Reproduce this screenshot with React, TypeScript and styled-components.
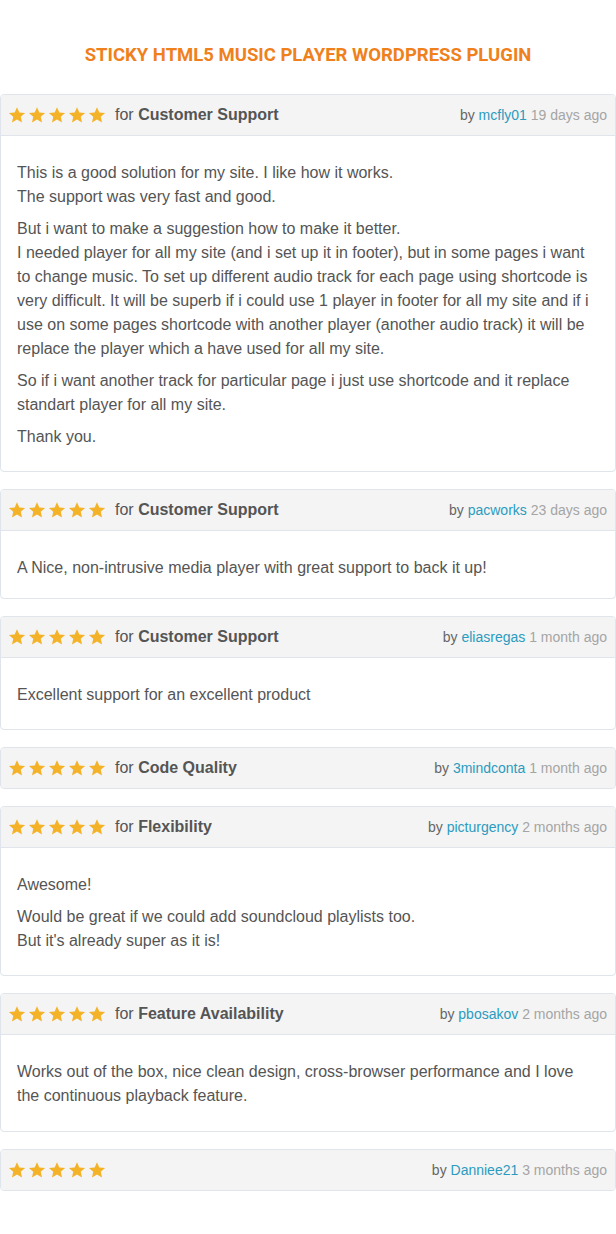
import React from "react";
import styled, { createGlobalStyle } from "styled-components";

const GlobalStyle = createGlobalStyle`
  html, body { margin: 0; padding: 0; background: #fff; }
  body { font-family: "Liberation Sans", Arial, sans-serif; }
`;

const Page = styled.div`
  width: 616px;
  padding: 0 0 40px;
  display: flex;
  flex-direction: column;
  gap: 17px;
`;

const Title = styled.h1`
  margin: 0;
  height: 94px;
  display: flex;
  align-items: center;
  justify-content: center;
  padding-top: 16px;
  box-sizing: border-box;
  margin-bottom: -17px;
  font-family: "Roboto", "Liberation Sans", sans-serif;
  font-weight: 700;
  font-size: 18.5px;
  color: #ef801c;
`;

const Card = styled.section`
  border: 1px solid #dfe5ea;
  border-radius: 4px;
  overflow: hidden;
  background: #fff;
`;

const Header = styled.div`
  height: 40px;
  background: #f4f4f4;
  display: flex;
  align-items: center;
  justify-content: space-between;
  padding: 0 8px 0 7px;
  font-size: 16px;
  color: #555;
`;

const Left = styled.div`
  display: flex;
  align-items: center;
  gap: 9px;
`;

const Stars = styled.div`
  display: flex;
  gap: 2px;
`;

const For = styled.span`
  color: #555;
  b { font-weight: 700; }
`;

const Meta = styled.span`
  font-size: 14px;
  color: #666;
`;

const User = styled.span`
  color: #2b9bbf;
`;

const Ago = styled.span`
  color: #a5a5a5;
`;

const Body = styled.div<{ $bottom?: number }>`
  border-top: 1px solid #dfe5ea;
  padding: 25px 16px ${(p) => p.$bottom ?? 22}px;
  font-size: 16px;
  line-height: 24px;
  color: #555;
  p { margin: 0; }
  p + p { margin-top: 8px; }
`;

const Star = () => (
  <svg width="18" height="18" viewBox="0 0 24 24">
    <path
      fill="#f4b229"
      d="M12 1.5l3.1 7.1 7.7.7-5.8 5.1 1.7 7.6L12 18l-6.7 4 1.7-7.6-5.8-5.1 7.7-.7z"
    />
  </svg>
);

type Review = {
  cat?: string;
  user: string;
  ago: string;
  bottom?: number;
  paras?: React.ReactNode[];
};

const reviews: Review[] = [
  {
    cat: "Customer Support",
    user: "mcfly01",
    ago: "19 days ago",
    paras: [
      <>This is a good solution for my site. I like how it works.<br />The support was very fast and good.</>,
      <>But i want to make a suggestion how to make it better.<br />I needed player for all my site (and i set up it in footer), but in some pages i want to change music. To set up different audio track for each page using shortcode is very difficult. It will be superb if i could use 1 player in footer for all my site and if i use on some pages shortcode with another player (another audio track) it will be replace the player which a have used for all my site.</>,
      <>So if i want another track for particular page i just use shortcode and it replace standart player for all my site.</>,
      <>Thank you.</>,
    ],
  },
  {
    cat: "Customer Support",
    user: "pacworks",
    ago: "23 days ago",
    bottom: 18,
    paras: [<>A Nice, non-intrusive media player with great support to back it up!</>],
  },
  {
    cat: "Customer Support",
    user: "eliasregas",
    ago: "1 month ago",
    paras: [<>Excellent support for an excellent product</>],
  },
  { cat: "Code Quality", user: "3mindconta", ago: "1 month ago" },
  {
    cat: "Flexibility",
    user: "picturgency",
    ago: "2 months ago",
    paras: [
      <>Awesome!</>,
      <>Would be great if we could add soundcloud playlists too.<br />But it's already super as it is!</>,
    ],
  },
  {
    cat: "Feature Availability",
    user: "pbosakov",
    ago: "2 months ago",
    bottom: 23,
    paras: [
      <>Works out of the box, nice clean design, cross-browser performance and I love the continuous playback feature.</>,
    ],
  },
  { user: "Danniee21", ago: "3 months ago" },
];

export default function App() {
  return (
    <>
      <GlobalStyle />
      <Page>
        <Title>STICKY HTML5 MUSIC PLAYER WORDPRESS PLUGIN</Title>
        {reviews.map((r, i) => (
          <Card key={i}>
            <Header>
              <Left>
                <Stars>
                  {[0, 1, 2, 3, 4].map((k) => (
                    <Star key={k} />
                  ))}
                </Stars>
                {r.cat && (
                  <For>
                    for <b>{r.cat}</b>
                  </For>
                )}
              </Left>
              <Meta>
                by <User>{r.user}</User> <Ago>{r.ago}</Ago>
              </Meta>
            </Header>
            {r.paras && (
              <Body $bottom={r.bottom}>
                {r.paras.map((p, j) => (
                  <p key={j}>{p}</p>
                ))}
              </Body>
            )}
          </Card>
        ))}
      </Page>
    </>
  );
}
